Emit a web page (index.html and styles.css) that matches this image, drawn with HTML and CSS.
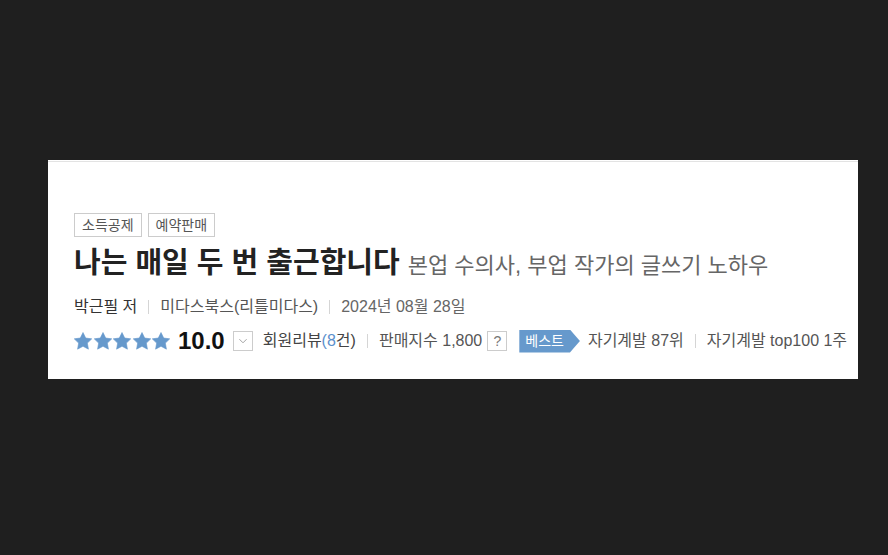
FILE: index.html
```html
<!DOCTYPE html>
<html lang="ko">
<head>
  <meta charset="UTF-8" />
  <meta name="viewport" content="width=device-width, initial-scale=1" />
  <title>나는 매일 두 번 출근합니다</title>
  <link rel="stylesheet" href="styles.css">
</head>
<body>

<div class="panel">
  <div class="inner">
    <div class="tags">
      <span class="tag">소득공제</span>
      <span class="tag">예약판매</span>
    </div>

    <h1 class="title">나는 매일 두 번 출근합니다 <span class="subtitle">본업 수의사, 부업 작가의 글쓰기 노하우</span></h1>

    <div class="meta">
      <span class="author">박근필 저</span>
      <span class="sep"></span>
      <span>미다스북스(리틀미다스)</span>
      <span class="sep"></span>
      <span class="date">2024년 08월 28일</span>
    </div>

    <div class="rating">
      <span class="stars">
        <svg viewBox="0 0 18 18"><path d="M9 .5L11.7 6 17.75 6.86 13.37 11.12 14.41 17.14 9 14.3 3.59 17.14 4.63 11.12 .25 6.86 6.3 6z"/></svg>
        <svg viewBox="0 0 18 18"><path d="M9 .5L11.7 6 17.75 6.86 13.37 11.12 14.41 17.14 9 14.3 3.59 17.14 4.63 11.12 .25 6.86 6.3 6z"/></svg>
        <svg viewBox="0 0 18 18"><path d="M9 .5L11.7 6 17.75 6.86 13.37 11.12 14.41 17.14 9 14.3 3.59 17.14 4.63 11.12 .25 6.86 6.3 6z"/></svg>
        <svg viewBox="0 0 18 18"><path d="M9 .5L11.7 6 17.75 6.86 13.37 11.12 14.41 17.14 9 14.3 3.59 17.14 4.63 11.12 .25 6.86 6.3 6z"/></svg>
        <svg viewBox="0 0 18 18"><path d="M9 .5L11.7 6 17.75 6.86 13.37 11.12 14.41 17.14 9 14.3 3.59 17.14 4.63 11.12 .25 6.86 6.3 6z"/></svg>
      </span>
      <span class="score">10.0</span>
      <span class="box">
        <svg viewBox="0 0 20 20"><polyline points="6,8 10,12 14,8" /></svg>
      </span>
      <span class="review">회원리뷰<span class="link">(8</span>건)</span>
      <span class="sep"></span>
      <span>판매지수 1,800</span>
      <span class="box qmark">?</span>
      <span class="best">베스트</span>
      <span>자기계발 87위</span>
      <span class="sep"></span>
      <span>자기계발 top100 1주</span>
    </div>
  </div>
</div>

</body>
</html>
```

FILE: styles.css
```css
body {
  margin: 0;
  background: #1f1f1f;
  font-family: "Liberation Sans", "Noto Sans CJK KR", sans-serif;
}
.panel {
  margin: 160px 0 0 48px;
  width: 810px;
  background: #fff;
  padding-top: 1px;
}
.inner {
  border-top: 1px solid #e3e3e3;
  padding: 51px 0 26px 26px;
  white-space: nowrap;
  overflow: hidden;
}
.tags {
  display: flex;
  gap: 6px;
}
.tag {
  border: 1px solid #ccc;
  font-size: 14px;
  line-height: 22px;
  padding: 0 7px;
  color: #555;
}
.title {
  margin: 8px 0 0;
  font-size: 29px;
  line-height: 36px;
  font-weight: 700;
  color: #222;
}
.subtitle {
  font-size: 22px;
  font-weight: 400;
  color: #666;
}
.meta, .rating {
  display: flex;
  align-items: center;
  font-size: 16px;
  line-height: 20px;
  color: #555;
}
.meta {
  margin-top: 13px;
}
.author {
  color: #333;
}
.date {
  color: #666;
}
.sep {
  width: 1px;
  height: 14px;
  background: #d5d5d5;
  margin: 0 11px;
}
.rating {
  margin-top: 12px;
  height: 24px;
}
.stars {
  display: flex;
  gap: 1.5px;
}
.stars svg {
  width: 18px;
  height: 18px;
  fill: #6699cc;
  stroke: #6699cc;
  stroke-width: .6;
  stroke-linejoin: round;
}
.score {
  font-size: 24px;
  line-height: 24px;
  font-weight: 700;
  color: #111;
  margin: 0 8px 0 8px;
}
.box {
  box-sizing: border-box;
  width: 20px;
  height: 20px;
  border: 1px solid #ccc;
  display: flex;
  align-items: center;
  justify-content: center;
}
.box svg {
  width: 18px;
  height: 18px;
  fill: none;
  stroke: #999;
  stroke-width: 1;
}
.review {
  margin-left: 10px;
  color: #444;
}
.link {
  color: #5b8fcc;
}
.qmark {
  margin-left: 5px;
  font-size: 14px;
  color: #777;
}
.best {
  background: #6699cc;
  color: #fff;
  font-size: 14px;
  line-height: 23px;
  padding: 0 16px 0 6px;
  margin: 0 8px 0 12px;
  clip-path: polygon(0 0, calc(100% - 10px) 0, 100% 50%, calc(100% - 10px) 100%, 0 100%);
}
```
